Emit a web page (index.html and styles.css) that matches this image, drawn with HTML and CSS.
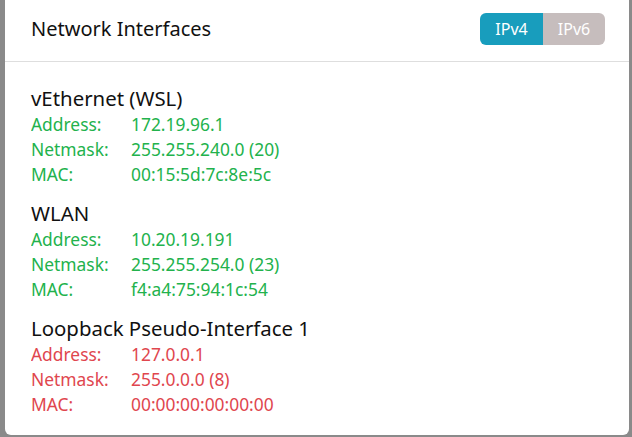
FILE: index.html
```html
<!DOCTYPE html>
<html>
<head>
<meta charset="utf-8">
<link rel="stylesheet" href="styles.css">
</head>
<body>
<div class="backdrop">
  <div class="modal">
    <div class="watermarks">
      <span class="wm wm-a">10.20.19.191 2023-10-17</span>
      <span class="wm wm-b">10.20.19.191 2023-10-17</span>
    </div>
    <div class="modal-header">
      <div class="modal-title">Network Interfaces</div>
      <div class="btn-group">
        <span class="seg seg-active">IPv4</span>
        <span class="seg seg-off">IPv6</span>
      </div>
    </div>
    <div class="modal-body">
      <section class="iface">
        <div class="iface-name">vEthernet (WSL)</div>
        <div class="row ok"><span class="k">Address:</span><span class="v">172.19.96.1</span></div>
        <div class="row ok"><span class="k">Netmask:</span><span class="v">255.255.240.0 (20)</span></div>
        <div class="row ok"><span class="k">MAC:</span><span class="v">00:15:5d:7c:8e:5c</span></div>
      </section>
      <section class="iface">
        <div class="iface-name">WLAN</div>
        <div class="row ok"><span class="k">Address:</span><span class="v">10.20.19.191</span></div>
        <div class="row ok"><span class="k">Netmask:</span><span class="v">255.255.254.0 (23)</span></div>
        <div class="row ok"><span class="k">MAC:</span><span class="v">f4:a4:75:94:1c:54</span></div>
      </section>
      <section class="iface">
        <div class="iface-name">Loopback Pseudo-Interface 1</div>
        <div class="row bad"><span class="k">Address:</span><span class="v">127.0.0.1</span></div>
        <div class="row bad"><span class="k">Netmask:</span><span class="v">255.0.0.0 (8)</span></div>
        <div class="row bad"><span class="k">MAC:</span><span class="v">00:00:00:00:00:00</span></div>
      </section>
    </div>
  </div>
</div>
</body>
</html>
```

FILE: styles.css
```css
html, body {
  margin: 0;
  padding: 0;
  height: 100%;
  overflow: hidden;
}
body {
  background: #8a8a8a;
  font-family: "Noto Sans", "Open Sans", sans-serif;
  color: #111;
}
.backdrop {
  padding: 0 3px 2px 5px;
  height: 100%;
  box-sizing: border-box;
  display: flex;
  flex-direction: column;
}
.modal {
  position: relative;
  flex: 1;
  background: #fff;
  border-radius: 0 0 6px 6px;
  overflow: hidden;
}
.watermarks {
  position: absolute;
  inset: 0;
  pointer-events: none;
}
.wm {
  position: absolute;
  white-space: nowrap;
  font-size: 36px;
  color: rgba(0, 0, 0, 0.025);
  transform-origin: 0 0;
  transform: rotate(-33deg);
}
.wm-a { left: 90px; top: 160px; }
.wm-b { left: 245px; top: 420px; }
.modal-header {
  position: relative;
  display: flex;
  align-items: center;
  justify-content: space-between;
  padding: 13px 24px 16px 26px;
  border-bottom: 1px solid #dedede;
}
.modal-title {
  font-size: 20px;
  line-height: 32px;
}
.btn-group {
  display: flex;
  height: 32px;
  border-radius: 6px;
  overflow: hidden;
}
.seg {
  display: flex;
  align-items: center;
  justify-content: center;
  width: 63px;
  color: #fff;
  font-size: 16px;
}
.seg-active { background: #189dbd; }
.seg-off { background: #c6bdbd; width: 62px; }
.modal-body {
  position: relative;
  padding: 23px 26px 0 26px;
}
.iface {
  margin-bottom: 13px;
}
.iface-name {
  font-size: 20.4px;
  line-height: 27px;
  height: 27px;
}
.row {
  display: flex;
  align-items: center;
  height: 25px;
  line-height: 25px;
  font-size: 17.4px;
  overflow: hidden;
}
.row .k {
  width: 100px;
}
.ok { color: #22b24c; }
.bad { color: #e0464e; }
```
